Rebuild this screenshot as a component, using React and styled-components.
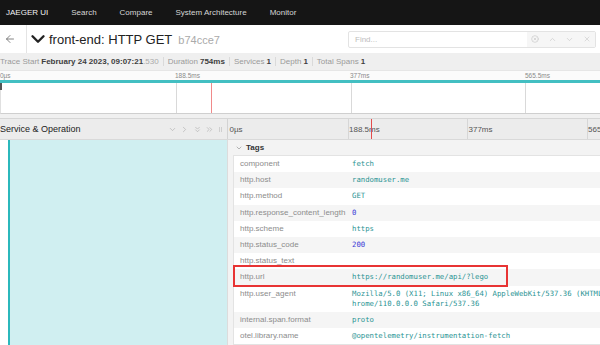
import React from "react";
import styled, { createGlobalStyle } from "styled-components";
import {
  ArrowLeft,
  ChevronDown,
  ChevronUp,
  ChevronRight,
  ChevronsDown,
  ChevronsRight,
  X,
  CircleX,
} from "lucide-react";

const GlobalStyle = createGlobalStyle`
  html, body { margin: 0; padding: 0; width: 600px; height: 345px; overflow: hidden; background: #fff; }
  body { font-family: "Liberation Sans", Arial, sans-serif; }
  #root { width: 600px; height: 345px; overflow: hidden; }
`;

const Page = styled.div`
  width: 600px;
  height: 345px;
  overflow: hidden;
  display: flex;
  flex-direction: column;
`;

/* ---------- top nav ---------- */
const Nav = styled.nav`
  flex: none;
  height: 25px;
  background: #151515;
  display: flex;
  align-items: center;
`;
const NavLink = styled.span`
  font-size: 8px;
  color: ${(p) => (p.$brand ? "#f2f2f2" : "#d6d6d6")};
  padding: 0 11.5px;
  white-space: nowrap;
  &:first-child { padding-left: 6px; }
`;

/* ---------- trace header ---------- */
const TraceHeader = styled.header`
  flex: none;
  height: 28px;
  display: flex;
  align-items: center;
  background: #fff;
`;
const BackBtn = styled.div`
  width: 27px;
  height: 100%;
  box-sizing: border-box;
  border-right: 1px solid #e4e4e4;
  display: flex;
  align-items: center;
  padding-left: 4px;
  color: #666;
`;
const TitleGroup = styled.div`
  display: flex;
  align-items: center;
  color: #222;
`;
const TitleText = styled.div`
  display: flex;
  align-items: baseline;
  white-space: nowrap;
`;
const Title = styled.h1`
  margin: 0;
  font-size: 13px;
  font-weight: normal;
  color: #222;
`;
const TraceId = styled.span`
  font-size: 11px;
  color: #aaa;
  margin-left: 6px;
`;
const FindBox = styled.div`
  margin-left: auto;
  margin-right: 4px;
  width: 248px;
  height: 17px;
  box-sizing: border-box;
  border: 1px solid #e3e3e3;
  border-radius: 2px;
  display: flex;
  overflow: hidden;
`;
const FindInput = styled.div`
  flex: 1;
  display: flex;
  align-items: center;
  padding-left: 6px;
  font-size: 8px;
  color: #bdbdbd;
`;
const FindActions = styled.div`
  width: 68px;
  background: #f6f6f6;
  display: flex;
  align-items: center;
  justify-content: space-around;
  color: #c9c9c9;
`;

/* ---------- info bar ---------- */
const InfoBar = styled.div`
  flex: none;
  height: 17px;
  background: #efefef;
  display: flex;
  align-items: center;
  font-size: 8px;
  color: #9a9a9a;
  white-space: nowrap;
`;
const InfoValue = styled.strong`
  color: #3e3e3e;
  margin-left: 2px;
`;
const InfoMuted = styled.span`
  color: #aaa;
`;
const Sep = styled.span`
  width: 1px;
  height: 9px;
  background: #dadada;
  margin: 0 4px;
`;

/* ---------- trace content (wider than viewport) ---------- */
const TraceContent = styled.div`
  flex: 1;
  width: 706px;
  display: flex;
  flex-direction: column;
  min-height: 0;
`;
const Minimap = styled.div`
  flex: none;
  width: 700px;
`;
const TickRow = styled.div`
  position: relative;
  height: 10px;
  box-sizing: border-box;
  border-top: 1px solid #e6e6e6;
  background: #fbfbfb;
`;
const MiniTickLabel = styled.span`
  position: absolute;
  top: 1px;
  font-size: 6.5px;
  color: #8a8a8a;
`;
const TealBar = styled.div`
  height: 3px;
  background: #43bfc2;
`;
const MiniCanvas = styled.div`
  position: relative;
  height: 30px;
  background: #fff;
  border-bottom: 1px solid #cfcfcf;
  border-left: 1px solid #e0e0e0;
`;
const VLine = styled.span`
  position: absolute;
  top: 0;
  bottom: 0;
  width: 1px;
  background-color: ${(p) => p.$color || "#d9d9d9"};
`;
const MiniMark = styled.span`
  position: absolute;
  left: -1px;
  top: 0;
  width: 2px;
  height: 7px;
  background: #555;
`;
const ScrubGap = styled.div`
  flex: none;
  height: 4px;
  background: #f0f0f0;
`;

const HeaderRow = styled.div`
  flex: none;
  height: 22px;
  box-sizing: border-box;
  display: flex;
  background: #ececec;
  border-top: 1px solid #d6d6d6;
  border-bottom: 1px solid #d9d9d9;
`;
const HeaderLeft = styled.div`
  width: 228px;
  box-sizing: border-box;
  border-right: 1px solid #d3d3d3;
  display: flex;
  align-items: center;
  font-size: 9px;
  color: #222;
  white-space: nowrap;
`;
const HeaderIcons = styled.div`
  margin-left: auto;
  display: flex;
  align-items: center;
  gap: 3.5px;
  color: #aaa;
`;
const Handle = styled.span`
  width: 3px;
  height: 5px;
  margin: 0 5px 0 5px;
  border-left: 1px solid #cfcfcf;
  border-right: 1px solid #cfcfcf;
  box-sizing: border-box;
`;
const HeaderTimeline = styled.div`
  position: relative;
  width: 478px;
`;
const TickLabel = styled.span`
  position: absolute;
  top: 50%;
  transform: translateY(-50%);
  margin-left: 1.5px;
  font-size: 8px;
  color: #555;
  white-space: nowrap;
`;

/* ---------- body ---------- */
const Body = styled.div`
  flex: 1;
  display: flex;
  min-height: 0;
`;
const BodyLeft = styled.div`
  width: 228px;
  flex: none;
  box-sizing: border-box;
  padding-left: 8px;
  border-right: 1px solid #dcdcdc;
  background: #fff;
  display: flex;
`;
const SpanStripe = styled.div`
  flex: 1;
  border-left: 2.5px solid #2bb8bc;
  background: #d0eff1;
`;
const BodyRight = styled.div`
  width: 478px;
  flex: none;
  background: #f3f3f3;
`;
const TagsHeader = styled.div`
  height: 15px;
  display: flex;
  align-items: center;
  gap: 3px;
  padding-left: 7px;
  font-size: 8px;
  font-weight: bold;
  color: #333;
  svg { color: #888; }
`;
const Table = styled.div`
  margin-left: 5px;
  width: max-content;
  border: 1px solid #e3e3e3;
  background: #fff;
`;
const Row = styled.div`
  position: relative;
  display: flex;
  background: ${(p) => (p.$odd ? "#f5f5f5" : "#fff")};
`;
const KeyCell = styled.div`
  width: 112px;
  flex: none;
  box-sizing: border-box;
  padding: 3.1px 6px;
  font-size: 8px;
  line-height: 10px;
  color: #8c8c8c;
  white-space: nowrap;
`;
const ValueCell = styled.div`
  width: calc(72ch + 1px);
  padding: 3.1px 6px;
  font-family: "DejaVu Sans Mono", "Liberation Mono", monospace;
  font-size: 7.3px;
  line-height: 10px;
  word-break: break-all;
  color: ${(p) => (p.$kind === "number" ? "#3a3ad6" : "#2a9494")};
`;
const Highlight = styled.span`
  position: absolute;
  z-index: 2;
  left: -1px;
  top: -4.5px;
  width: 275px;
  height: 22px;
  box-sizing: border-box;
  border: 2px solid rgb(232, 52, 52);
  pointer-events: none;
`;

const navItems = ["Search", "Compare", "System Architecture", "Monitor"];
const ticks = [
  { pct: 0, label: "0µs" },
  { pct: 25, label: "188.5ms" },
  { pct: 50, label: "377ms" },
  { pct: 75, label: "565.5ms" },
];

const tags = [
  ["component", "fetch"],
  ["http.host", "randomuser.me"],
  ["http.method", "GET"],
  ["http.response_content_length", "0", "number"],
  ["http.scheme", "https"],
  ["http.status_code", "200", "number"],
  ["http.status_text", ""],
  ["http.url", "https://randomuser.me/api/?lego", "string", true],
  [
    "http.user_agent",
    "Mozilla/5.0 (X11; Linux x86_64) AppleWebKit/537.36 (KHTML, like Gecko) Chrome/110.0.0.0 Safari/537.36",
  ],
  ["internal.span.format", "proto"],
  ["otel.library.name", "@opentelemetry/instrumentation-fetch"],
];

export default function App() {
  return (
    <Page>
      <GlobalStyle />
      <Nav>
        <NavLink $brand>JAEGER UI</NavLink>
        {navItems.map((n) => (
          <NavLink key={n}>{n}</NavLink>
        ))}
      </Nav>

      <TraceHeader>
        <BackBtn>
          <ArrowLeft size={12} strokeWidth={1.6} />
        </BackBtn>
        <TitleGroup>
          <ChevronDown size={22} strokeWidth={2.6} />
          <TitleText>
            <Title>front-end: HTTP GET</Title>
            <TraceId>b74cce7</TraceId>
          </TitleText>
        </TitleGroup>
        <FindBox>
          <FindInput>Find...</FindInput>
          <FindActions>
            <CircleX size={8} strokeWidth={2} />
            <ChevronUp size={9} strokeWidth={1.8} />
            <ChevronDown size={9} strokeWidth={1.8} />
            <X size={8} strokeWidth={1.8} />
          </FindActions>
        </FindBox>
      </TraceHeader>

      <InfoBar>
        Trace Start
        <InfoValue>February 24 2023, 09:07:21</InfoValue>
        <InfoMuted>.530</InfoMuted>
        <Sep />
        Duration<InfoValue>754ms</InfoValue>
        <Sep />
        Services<InfoValue>1</InfoValue>
        <Sep />
        Depth<InfoValue>1</InfoValue>
        <Sep />
        Total Spans<InfoValue>1</InfoValue>
      </InfoBar>

      <TraceContent>
        <Minimap>
          <TickRow>
            {ticks.map((t) => (
              <MiniTickLabel key={t.label} style={{ left: `${t.pct}%` }}>
                {t.label}
              </MiniTickLabel>
            ))}
          </TickRow>
          <TealBar />
          <MiniCanvas>
            <MiniMark />
            {ticks.slice(1).map((t) => (
              <VLine key={t.label} style={{ left: `${t.pct}%` }} />
            ))}
            <VLine $color="#f08a8a" style={{ left: "30.1%" }} />
          </MiniCanvas>
        </Minimap>
        <ScrubGap />

        <HeaderRow>
          <HeaderLeft>
            Service &amp; Operation
            <HeaderIcons>
              <ChevronDown size={9} strokeWidth={1.6} />
              <ChevronRight size={9} strokeWidth={1.6} />
              <ChevronsDown size={9} strokeWidth={1.6} />
              <ChevronsRight size={9} strokeWidth={1.6} />
            </HeaderIcons>
            <Handle />
          </HeaderLeft>
          <HeaderTimeline>
            {ticks.slice(1).map((t) => (
              <VLine key={t.label} $color="#d6d6d6" style={{ left: `${t.pct}%` }} />
            ))}
            {ticks.map((t) => (
              <TickLabel key={t.label} style={{ left: `${t.pct}%` }}>
                {t.label}
              </TickLabel>
            ))}
            <VLine $color="#e24c4c" style={{ left: "30%" }} />
          </HeaderTimeline>
        </HeaderRow>

        <Body>
          <BodyLeft>
            <SpanStripe />
          </BodyLeft>
          <BodyRight>
            <TagsHeader>
              <ChevronDown size={8} strokeWidth={1.8} />
              Tags
            </TagsHeader>
            <Table>
              {tags.map(([k, v, kind, hl], i) => (
                <Row key={k} $odd={i % 2 === 1}>
                  <KeyCell>{k}</KeyCell>
                  <ValueCell $kind={kind}>{v}</ValueCell>
                  {hl && <Highlight />}
                </Row>
              ))}
            </Table>
          </BodyRight>
        </Body>
      </TraceContent>
    </Page>
  );
}
